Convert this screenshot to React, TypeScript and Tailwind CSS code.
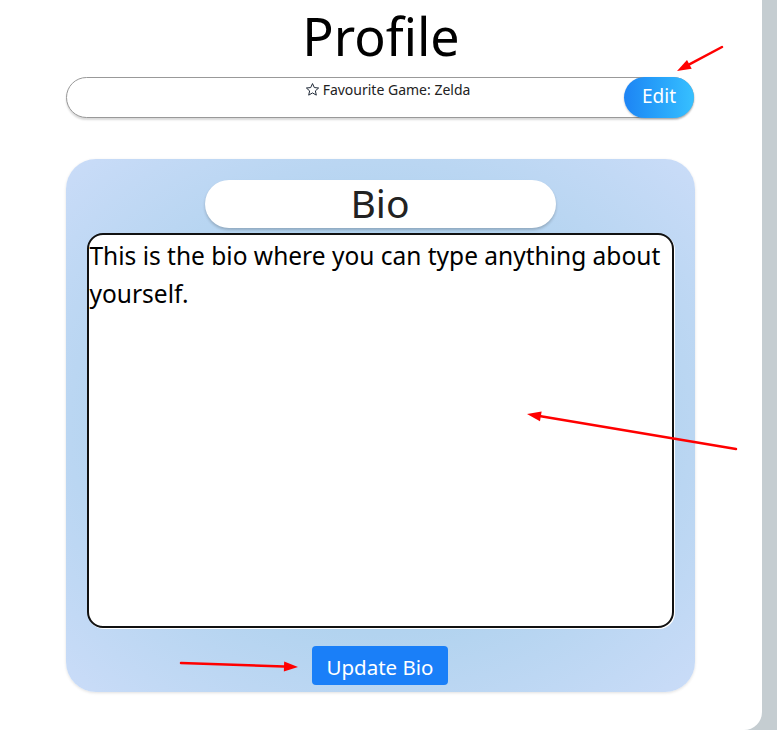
import React, { useState } from 'react';

const font = { fontFamily: '"Noto Sans", "Liberation Sans", sans-serif' };

// Flechas rojas de anotación encima de la captura
const Arrow: React.FC<{ x1: number; y1: number; x2: number; y2: number }> = ({ x1, y1, x2, y2 }) => {
  const a = Math.atan2(y2 - y1, x2 - x1);
  const len = 14;
  const w = 5;
  const bx = x2 - len * Math.cos(a);
  const by = y2 - len * Math.sin(a);
  const p1 = `${bx + w * Math.sin(a)},${by - w * Math.cos(a)}`;
  const p2 = `${bx - w * Math.sin(a)},${by + w * Math.cos(a)}`;
  return (
    <g>
      <line x1={x1} y1={y1} x2={bx} y2={by} stroke="#f00" strokeWidth={2.5} strokeLinecap="round" />
      <polygon points={`${x2},${y2} ${p1} ${p2}`} fill="#f00" />
    </g>
  );
};

const App: React.FC = () => {
  const [bio, setBio] = useState('This is the bio where you can type anything about yourself.');

  return (
    <div className="relative flex h-[730px] w-[777px] overflow-hidden bg-[#c5cdd1]" style={font}>
      <div className="flex h-[730px] w-[762px] flex-col items-center rounded-br-[18px] bg-white">
        <h1 className="h-[77px] text-[52px] leading-[72px] text-black">Profile</h1>

        <div className="ml-[-2px] flex h-[41px] w-[628px] items-start justify-between rounded-full border border-[#999] bg-white shadow-[0_2px_2px_rgba(0,0,0,0.15)]">
          <div className="flex-1 pl-[84px] pt-[1px] text-center text-[14px] text-[#222]">
            <span className="inline-flex items-center gap-[3px]">
              <svg width="15" height="15" viewBox="0 0 24 24" fill="none" stroke="#1f2937" strokeWidth="1.6" strokeLinejoin="round">
                <polygon points="12,2.5 14.9,8.9 21.8,9.6 16.6,14.2 18.1,21 12,17.5 5.9,21 7.4,14.2 2.2,9.6 9.1,8.9" />
              </svg>
              Favourite Game: Zelda
            </span>
          </div>
          <button className="mr-[-1px] mt-[-1px] h-[41px] w-[70px] rounded-full bg-gradient-to-r from-[#1e84f4] to-[#37c0ff] pb-[2px] text-[19px] text-white shadow-[0_1px_2px_rgba(0,0,0,0.25)]">
            Edit
          </button>
        </div>

        <div className="mt-[41px] ml-[-2px] flex h-[533px] w-[629px] flex-col items-center rounded-[30px] bg-[radial-gradient(ellipse_at_center,#a6cdec_0%,#b2d3ef_55%,#cadcf8_100%)] shadow-[0_1px_3px_rgba(0,0,0,0.12)]">
          <div className="mt-[21px] flex h-[48px] w-[351px] items-center justify-center rounded-full bg-white pb-[2px] text-[39px] text-[#222] shadow-[0_2px_3px_rgba(0,0,0,0.2)]">
            Bio
          </div>
          <textarea
            value={bio}
            onChange={e => setBio(e.target.value)}
            className="mt-[5px] h-[395px] w-[587px] resize-none rounded-[16px] border-2 border-[#111] bg-white px-[1px] pt-[2px] text-[24.5px] leading-[38px] text-black outline-none shadow-[1px_1px_0_#fff]"
            style={font}
          />
          <button className="mt-[18px] h-[39px] w-[136px] rounded-[4px] bg-[#1a7ff8] pt-[3px] text-[20.5px] leading-[28px] text-white">
            Update Bio
          </button>
        </div>
      </div>

      <svg className="pointer-events-none absolute left-0 top-0" width="777" height="730">
        <Arrow x1={722} y1={47} x2={677} y2={71} />
        <Arrow x1={736} y1={449} x2={527} y2={414} />
        <Arrow x1={181} y1={663} x2={298} y2={667} />
      </svg>
    </div>
  );
};

export default App;
